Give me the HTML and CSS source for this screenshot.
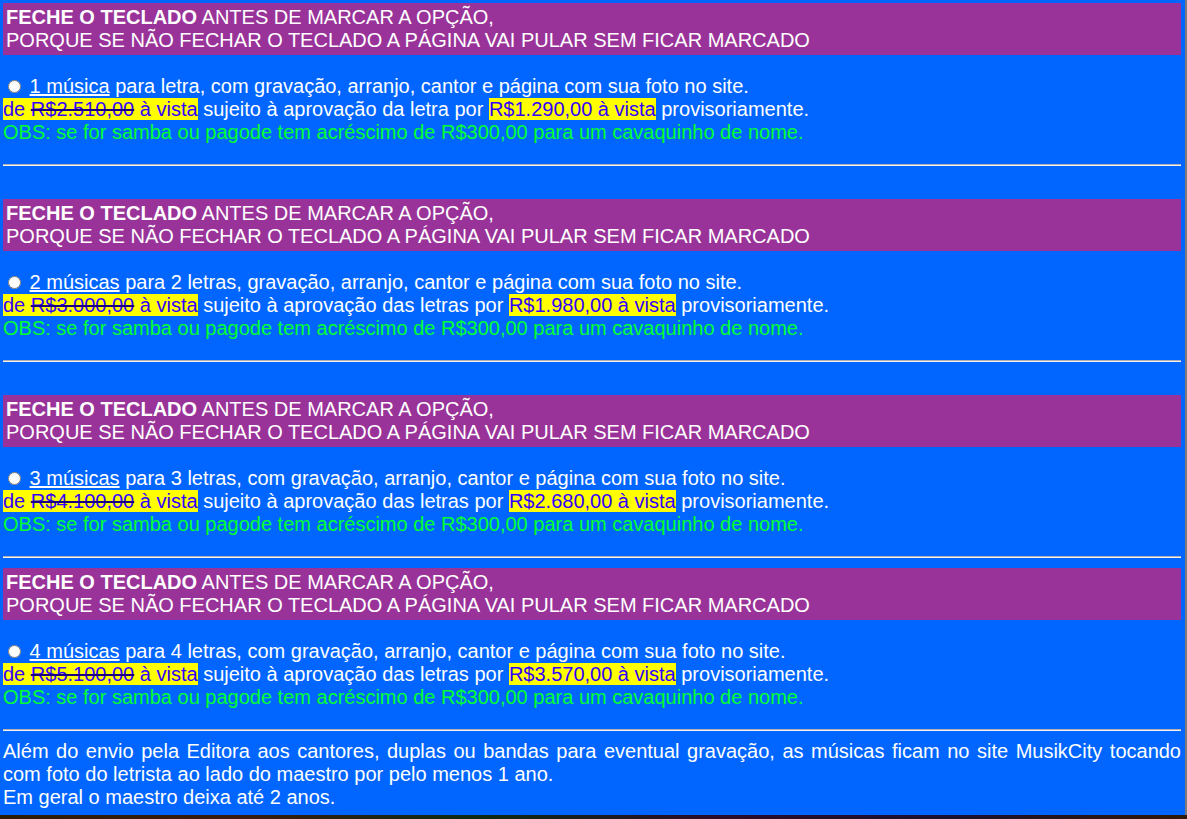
FILE: index.html
```html
<!DOCTYPE html>
<html lang="pt-BR">
<head>
<meta charset="utf-8">
<title>Opções</title>
<link rel="stylesheet" href="styles.css">
</head>
<body>
<div class="page">
  <section class="offer">
    <div class="warn"><b>FECHE O TECLADO</b> ANTES DE MARCAR A OPÇÃO,<br>PORQUE SE NÃO FECHAR O TECLADO A PÁGINA VAI PULAR SEM FICAR MARCADO</div>
    <div class="option">
      <label><input type="radio" name="op" class="radio"> <u>1 música</u> para letra, com gravação, arranjo, cantor e página com sua foto no site.</label><br>
      <span class="price">de <s>R$2.510,00</s> à vista</span> sujeito à aprovação da letra por <span class="price">R$1.290,00 à vista</span> provisoriamente.<br>
      <span class="obs">OBS: se for samba ou pagode tem acréscimo de R$300,00 para um cavaquinho de nome.</span>
    </div>
    <hr class="rule">
  </section>
  <section class="offer">
    <div class="warn"><b>FECHE O TECLADO</b> ANTES DE MARCAR A OPÇÃO,<br>PORQUE SE NÃO FECHAR O TECLADO A PÁGINA VAI PULAR SEM FICAR MARCADO</div>
    <div class="option">
      <label><input type="radio" name="op" class="radio"> <u>2 músicas</u> para 2 letras, gravação, arranjo, cantor e página com sua foto no site.</label><br>
      <span class="price">de <s>R$3.000,00</s> à vista</span> sujeito à aprovação das letras por <span class="price">R$1.980,00 à vista</span> provisoriamente.<br>
      <span class="obs">OBS: se for samba ou pagode tem acréscimo de R$300,00 para um cavaquinho de nome.</span>
    </div>
    <hr class="rule">
  </section>
  <section class="offer">
    <div class="warn"><b>FECHE O TECLADO</b> ANTES DE MARCAR A OPÇÃO,<br>PORQUE SE NÃO FECHAR O TECLADO A PÁGINA VAI PULAR SEM FICAR MARCADO</div>
    <div class="option">
      <label><input type="radio" name="op" class="radio"> <u>3 músicas</u> para 3 letras, com gravação, arranjo, cantor e página com sua foto no site.</label><br>
      <span class="price">de <s>R$4.100,00</s> à vista</span> sujeito à aprovação das letras por <span class="price">R$2.680,00 à vista</span> provisoriamente.<br>
      <span class="obs">OBS: se for samba ou pagode tem acréscimo de R$300,00 para um cavaquinho de nome.</span>
    </div>
    <hr class="rule rule-tight">
  </section>
  <section class="offer">
    <div class="warn"><b>FECHE O TECLADO</b> ANTES DE MARCAR A OPÇÃO,<br>PORQUE SE NÃO FECHAR O TECLADO A PÁGINA VAI PULAR SEM FICAR MARCADO</div>
    <div class="option">
      <label><input type="radio" name="op" class="radio"> <u>4 músicas</u> para 4 letras, com gravação, arranjo, cantor e página com sua foto no site.</label><br>
      <span class="price">de <s>R$5.100,00</s> à vista</span> sujeito à aprovação das letras por <span class="price">R$3.570,00 à vista</span> provisoriamente.<br>
      <span class="obs">OBS: se for samba ou pagode tem acréscimo de R$300,00 para um cavaquinho de nome.</span>
    </div>
    <hr class="rule rule-last">
  </section>
  <p class="footer">Além do envio pela Editora aos cantores, duplas ou bandas para eventual gravação, as músicas ficam no site MusikCity tocando com foto do letrista ao lado do maestro por pelo menos 1 ano.<br>Em geral o maestro deixa até 2 anos.</p>
</div>
</body>
</html>
```
FILE: styles.css
```css
html {
  background: linear-gradient(90deg, #2a1c08 0%, #3a1a10 20%, #0c2a14 40%, #2a0c2a 60%, #1a1030 80%, #301808 100%);
  min-height: 100%;
}
body {
  margin: 0;
  font-family: "Liberation Sans", Arial, sans-serif;
  font-size: 20px;
  line-height: 23px;
  color: #ffffff;
}
.page {
  width: 1178px;
  height: 812px;
  padding: 3px 4px 0 3px;
  background: #0066ff;
  border-right: 2px solid #7a7a7a;
  box-sizing: content-box;
}
.warn {
  background: #993399;
  padding: 3px;
  color: #ffffff;
}
.warn b {
  font-weight: bold;
}
.option {
  margin-top: 20px;
}
.radio {
  margin: 3px 3px 0 5px;
  width: 13px;
  height: 13px;
  vertical-align: baseline;
}
.option u {
  text-decoration: underline;
}
.price {
  background: #ffff00;
  color: #3300ff;
}
.price s {
  text-decoration-color: #1a0080;
}
.obs {
  color: #00ff33;
}
.rule {
  margin: 20px 0 33px 0;
  height: 0;
  border: 0;
  border-top: 1px solid #b0b0b0;
  border-bottom: 1px solid #f2f2f2;
}
.rule-tight {
  margin-bottom: 10px;
}
.rule-last {
  margin-bottom: 9px;
}
.footer {
  margin: 0;
  text-align: justify;
}
```
